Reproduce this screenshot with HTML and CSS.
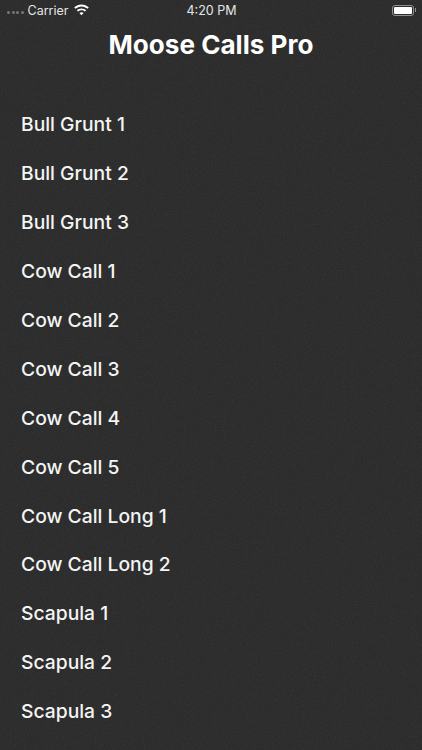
FILE: index.html
```html
<!DOCTYPE html>
<html lang="en">
<head>
    <meta charset="UTF-8">
    <title>Moose Calls Pro</title>
    <link rel="stylesheet" href="styles.css">
</head>
<body>
<svg class="grain" width="422" height="750" aria-hidden="true">
    <filter id="noise">
        <feTurbulence type="fractalNoise" baseFrequency="0.9" numOctaves="2" seed="4"/>
        <feColorMatrix values="0 0 0 0 1  0 0 0 0 1  0 0 0 0 1  1.2 0 0 0 -0.5"/>
    </filter>
    <rect width="422" height="750" filter="url(#noise)" opacity="0.08"/>
</svg>
<div class="status">
    <div class="status-left">
        <div class="signal"><i></i><i></i><i></i><i></i></div>
        <span>Carrier</span>
        <svg class="wifi" width="17" height="12" viewBox="0 0 16 11.500">
            <path d="M8 2.300c2.200 0 4.200.9 5.700 2.300l1.300-1.300C13.100 1.500 10.700.4 8 .4S2.900 1.500 1 3.300l1.300 1.300C3.800 3.200 5.800 2.300 8 2.300z"/>
            <path d="M8 6c1.200 0 2.300.5 3.200 1.300l1.300-1.300C11.300 4.900 9.700 4.200 8 4.200S4.700 4.900 3.500 6l1.300 1.300C5.700 6.500 6.800 6 8 6z"/>
            <path d="M8 7.800c-.8 0-1.500.3-2 .8l2 2.200 2-2.200c-.5-.5-1.200-.8-2-.8z"/>
        </svg>
    </div>
    <div class="status-time">4:20 PM</div>
    <div class="status-right">
        <div class="battery"><div class="battery-fill"></div></div>
        <div class="battery-tip"></div>
    </div>
</div>
<h1 class="title">Moose Calls Pro</h1>
<ul class="calls">
    <li>Bull Grunt 1</li>
    <li>Bull Grunt 2</li>
    <li>Bull Grunt 3</li>
    <li>Cow Call 1</li>
    <li>Cow Call 2</li>
    <li>Cow Call 3</li>
    <li>Cow Call 4</li>
    <li>Cow Call 5</li>
    <li>Cow Call Long 1</li>
    <li>Cow Call Long 2</li>
    <li>Scapula 1</li>
    <li>Scapula 2</li>
    <li>Scapula 3</li>
</ul>
</body>
</html>
```
FILE: styles.css
```css
html, body {
    height: 100%;
}

body {
    margin: 0;
    overflow: hidden;
    background: #2b2c2b;
    color: #fff;
    font-family: Inter, "Liberation Sans", sans-serif;
}

.grain {
    position: absolute;
    top: 0;
    left: 0;
    pointer-events: none;
}

.status {
    display: flex;
    align-items: center;
    justify-content: space-between;
    height: 20px;
    padding: 0 6px 0 7px;
    font-size: 12.5px;
    color: #e6e6e6;
}

.status-left, .status-right {
    display: flex;
    flex: 1;
    align-items: center;
}

.status-right {
    justify-content: flex-end;
}

.signal {
    display: flex;
    gap: 1.5px;
    margin-right: 4px;
    padding-top: 5px;
}

.signal i {
    width: 3px;
    height: 3px;
    border-radius: 50%;
    background: #777;
}

.wifi {
    margin-left: 5px;
    fill: #fff;
}

.battery {
    width: 22px;
    height: 11px;
    padding: 1px;
    border: 1px solid #8d8d8d;
    border-radius: 3px;
    box-sizing: border-box;
}

.battery-fill {
    height: 100%;
    border-radius: 1px;
    background: #fff;
}

.battery-tip {
    width: 1px;
    height: 4px;
    margin-left: 1px;
    background: #8d8d8d;
}

.title {
    margin: 7px 0 0;
    font-size: 26.1px;
    font-weight: 700;
    line-height: 36px;
    text-align: center;
}

.calls {
    margin: 37px 0 0;
    padding: 0 0 0 21px;
    list-style: none;
}

.calls li {
    height: 48.95px;
    font-size: 19.3px;
    font-weight: 500;
    line-height: 48.95px;
    color: #f4f4f4;
}
```
